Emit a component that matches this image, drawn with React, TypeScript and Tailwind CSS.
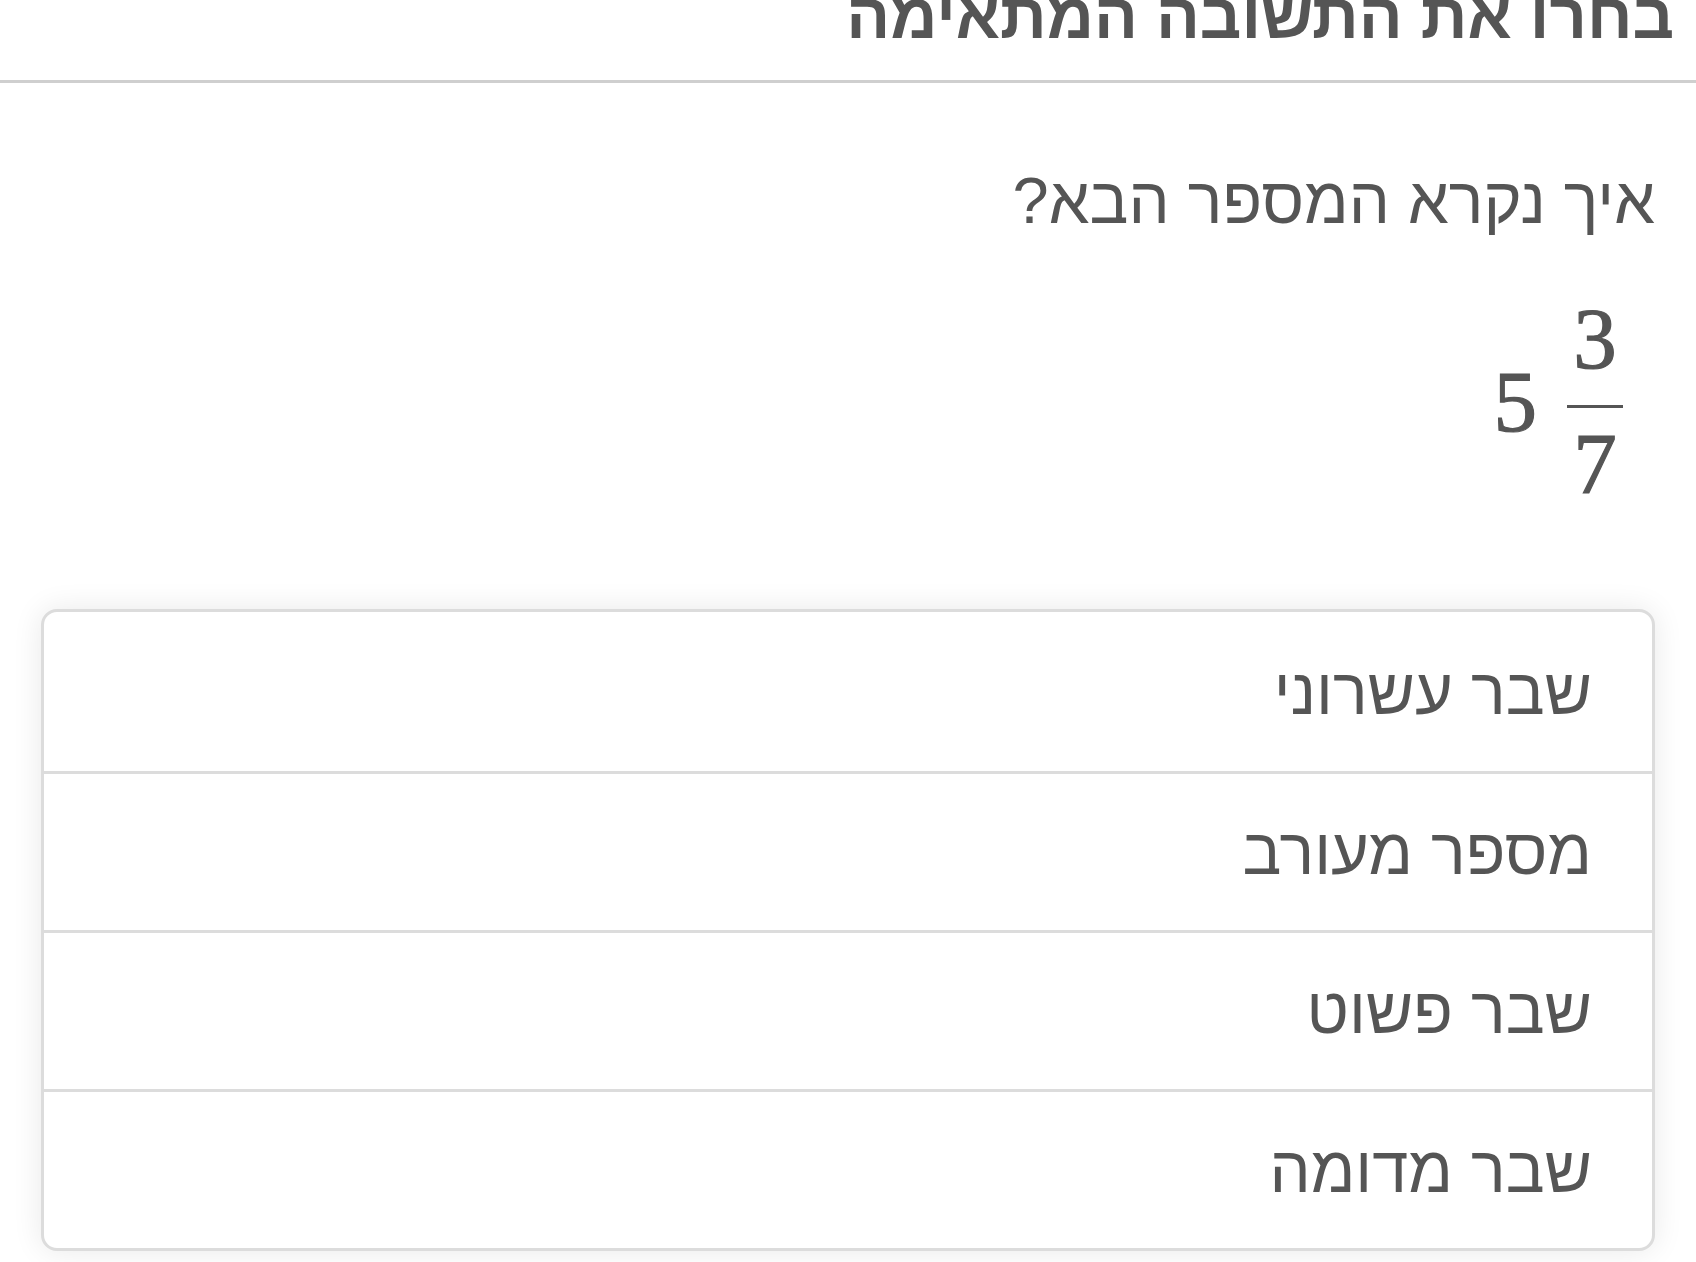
import React from 'react';

const answers = ['שבר עשרוני', 'מספר מעורב', 'שבר פשוט', 'שבר מדומה'];

const MixedNumber: React.FC = () => (
  <div className="flex items-center gap-[30px] text-[#555] font-[family-name:'Liberation_Serif',serif] [-webkit-text-stroke:1.2px_#555]" dir="ltr">
    <span className="text-[87px] leading-none">5</span>
    <div className="flex flex-col items-center">
      <span className="text-[87px] leading-[72px] pb-[30px]">3</span>
      <span className="block w-[56px] h-[3px] bg-[#555]" />
      <span className="text-[87px] leading-[72px] pt-[20px]">7</span>
    </div>
  </div>
);

export default function App() {
  return (
    <div dir="rtl" className="min-h-screen bg-white text-[#555] font-[family-name:'Liberation_Sans',sans-serif]">
      <div className="h-[83px] border-b-[3px] border-[#cfcfcf] overflow-hidden pr-[22px]">
        <h1 className="-mt-[32px] text-[65px] leading-[96px] font-bold">בחרו את התשובה המתאימה</h1>
      </div>

      <div className="px-[41px] pt-[78px]">
        <p className="text-[65px] leading-[80px]">איך נקרא המספר הבא?</p>

        <div className="flex justify-start pr-[32px] pt-[62px]">
          <MixedNumber />
        </div>

        <div className="mt-[109px] rounded-[16px] border-[3px] border-[#dcdcdc] bg-white shadow-[0_0_30px_rgba(0,0,0,0.09)] overflow-hidden">
          {answers.map((a, i) => (
            <button
              key={a}
              className={`block w-full h-[159px] text-right pr-[60px] text-[65px] text-[#555] ${i > 0 ? 'border-t-[3px] border-[#dcdcdc]' : ''}`}
            >
              {a}
            </button>
          ))}
        </div>
      </div>
    </div>
  );
}
